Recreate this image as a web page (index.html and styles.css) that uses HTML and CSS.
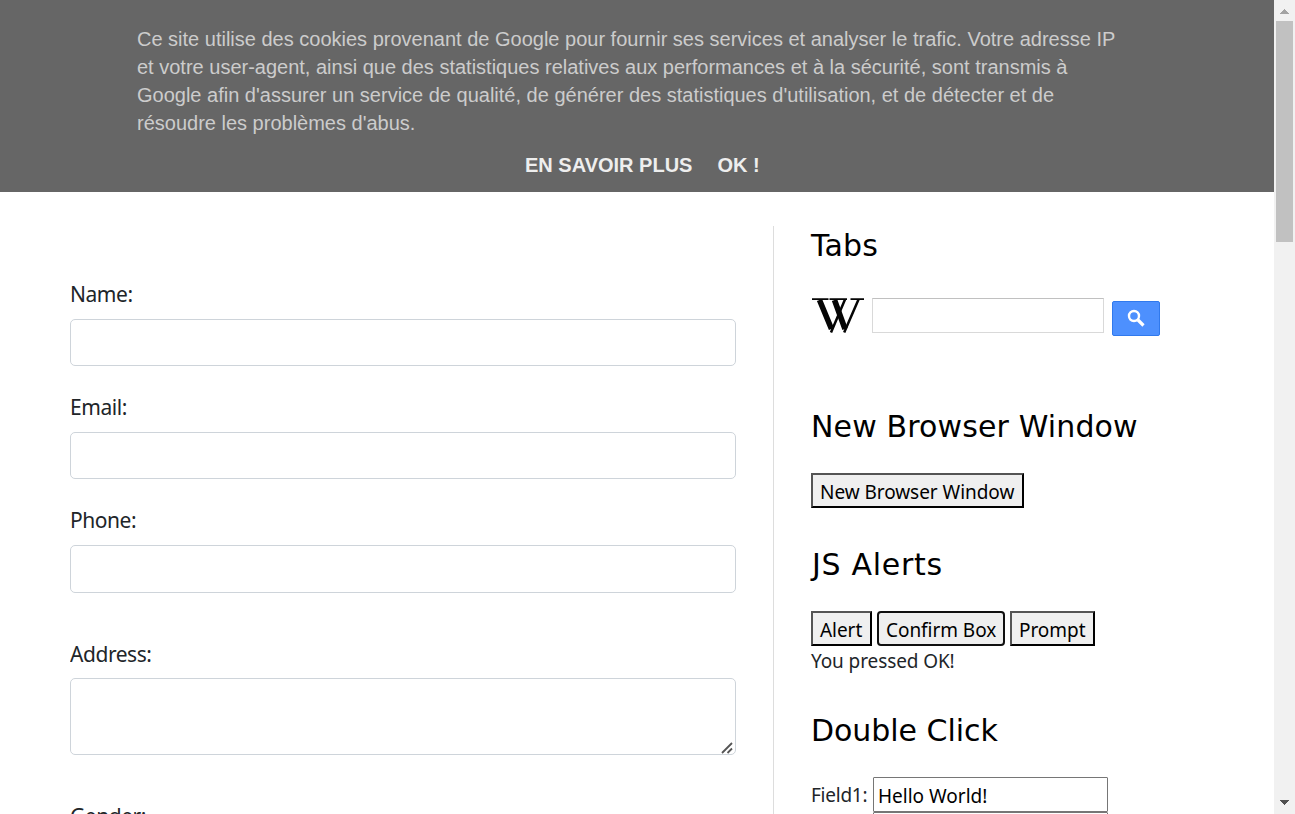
FILE: index.html
```html
<!DOCTYPE html>
<html lang="fr">
<head>
<meta charset="utf-8">
<title>Automation Testing Practice</title>
<link rel="stylesheet" href="styles.css">
</head>
<body>
<div class="viewport">
  <div class="page">
    <header class="cookies">
      <p class="notice">Ce site utilise des cookies provenant de Google pour fournir ses services et analyser le trafic. Votre adresse IP<br>et votre user-agent, ainsi que des statistiques relatives aux performances et à la sécurité, sont transmis à<br>Google afin d'assurer un service de qualité, de générer des statistiques d'utilisation, et de détecter et de<br>résoudre les problèmes d'abus.</p>
      <div class="actions"><a class="more">EN SAVOIR PLUS</a><a class="ok">OK !</a></div>
    </header>
    <main class="columns">
      <form class="form">
        <label class="label name">Name:</label><input class="field" type="text">
        <label class="label">Email:</label><input class="field" type="text">
        <label class="label">Phone:</label><input class="field phone" type="text">
        <label class="label address">Address:</label>
        <div class="area-box"><textarea class="field area"></textarea><svg class="grip" width="12" height="12" viewBox="0 0 12 12" stroke="#555" stroke-width="1.800"><path d="M1 11L11 1M6.500 11L11 6.500"/></svg></div>
        <label class="label gender">Gender:</label>
      </form>
      <aside class="side">
        <h2 class="title tabs">Tabs</h2>
        <div class="search">
          <svg class="wiki" width="54" height="37" viewBox="0 0 54 37" fill="none" stroke="#050505">
            <path stroke-width="1.700" d="M1 2.200H17.500M18.500 2.200H36M39.500 2.200H53"/>
            <path stroke-width="5.600" d="M8.500 3L20.500 32M23.500 3L34 32"/>
            <path stroke-width="2.500" d="M20 35.500L34 2.500M33.200 35.500L47.500 2.500"/>
          </svg>
          <input class="query" type="text">
          <button class="go" type="button"><svg width="20" height="20" viewBox="0 0 20 20" fill="none" stroke="#fff"><circle cx="8" cy="8" r="5" stroke-width="2.400"/><path stroke-width="3.200" d="M12 12L17.500 17.500"/></svg></button>
        </div>
        <h2 class="title window">New Browser Window</h2>
        <div class="row"><button class="btn b-window"><span>New Browser Window</span></button></div>
        <h2 class="title alerts">JS Alerts</h2>
        <div class="row"><button class="btn b-alert"><span>Alert</span></button><button class="btn b-confirm"><span>Confirm Box</span></button><button class="btn b-prompt"><span>Prompt</span></button></div>
        <p class="result">You pressed OK!</p>
        <h2 class="title double">Double Click</h2>
        <div class="line"><span class="caption">Field1:</span><input class="text" type="text" value="Hello World!"></div>
        <div class="line second"><input class="text" type="text"></div>
      </aside>
    </main>
  </div>
  <div class="scrollbar">
    <svg width="21" height="21" viewBox="0 0 21 21" shape-rendering="crispEdges"><path fill="#a3a3a3" d="M6 14L10.500 9L15 14Z"/></svg>
    <div class="thumb"></div>
    <svg class="down" width="21" height="21" viewBox="0 0 21 21" shape-rendering="crispEdges"><path fill="#505050" d="M6 7H15L10.500 12Z"/></svg>
  </div>
</div>
</body>
</html>
```
FILE: styles.css
```css
* { box-sizing: border-box; }
body { margin: 0; overflow: hidden; background: #fff; color: #212529; font-family: "Noto Sans", sans-serif; }
.viewport { display: flex; width: 1295px; height: 814px; overflow: hidden; }
.page { width: 1274px; height: 814px; overflow: hidden; }
.cookies { height: 192px; padding: 25px 137px 0; background: #666; font-family: "Liberation Sans", Arial, sans-serif; }
.notice { margin: 0; font-size: 20px; line-height: 28px; color: #ccc; white-space: nowrap; }
.actions { display: flex; margin: 14px 0 0 388px; gap: 25px; font-size: 20px; line-height: 28px; font-weight: bold; color: #eee; white-space: nowrap; }
.columns { display: flex; padding: 34px 0 0 70px; }
.form { width: 704px; height: 588px; padding-right: 38px; border-right: 1px solid #ddd; overflow: hidden; }
.label { display: block; height: 30px; margin: 26px 0 10px; font-size: 21px; line-height: 30px; letter-spacing: -0.45px; }
.name { margin: 53px 0 10px; }
.address { margin: 46px 0 9px; }
.gender { margin: 46px 0 0; }
.field { display: block; width: 666px; height: 47px; margin: 0; padding: 8px 15px; border: 1px solid #ced4da; border-radius: 5px; background: #fff; outline: 0; }
.phone { height: 48px; }
.area-box { position: relative; }
.area { height: 77px; resize: none; }
.grip { position: absolute; right: 2px; bottom: 1px; }
.side { width: 463px; padding-left: 37px; }
.title { margin: 0; height: 40px; font: 400 30px/40px "DejaVu Sans", Verdana, sans-serif; letter-spacing: 0.13px; color: #000; white-space: nowrap; }
.search { display: flex; height: 39px; margin-top: 31px; }
.wiki { margin-right: 7px; }
.query { width: 232px; height: 35px; margin: 1px 8px 0 0; border: 1px solid #d9d9d9; border-top-color: #c0c0c0; }
.go { display: flex; justify-content: center; width: 48px; height: 35px; margin-top: 4px; padding: 6px 0; border: 1px solid #3079ed; border-radius: 2px; background: #4d90fe; }
.title.window { margin-top: 71px; }
.row { display: flex; gap: 5px; margin-top: 26px; }
.btn { height: 35px; padding: 0 0 0 7px; border: 2px outset #000; background: #efefef; color: #000; font: 400 19px/31px "Noto Sans", sans-serif; letter-spacing: -0.05px; text-align: left; white-space: nowrap; }
.btn span { display: block; height: 31px; line-height: 34px; }
.b-window { width: 213px; }
.b-alert { width: 61px; }
.b-confirm { width: 128px; border: 2px solid #101010; border-radius: 4px; }
.b-prompt { width: 85px; }
.title.alerts { margin-top: 37px; letter-spacing: 0.7px; text-indent: 1px; }
.result { margin: 0; height: 30px; font-size: 19px; line-height: 30px; letter-spacing: -0.1px; }
.title.double { margin-top: 35px; letter-spacing: -0.05px; }
.line { display: flex; margin-top: 26px; font-size: 19px; line-height: 36px; letter-spacing: -0.25px; }
.line.second { margin-top: -1px; padding-left: 62px; }
.caption { width: 62px; white-space: nowrap; }
.text { width: 235px; height: 35px; padding: 3px 4px 0; border: 1px solid #767676; border-radius: 1px; font: 400 19px "Noto Sans", sans-serif; color: #000; }
.scrollbar { display: flex; flex-direction: column; width: 21px; height: 814px; background: #f1f1f1; }
.thumb { width: 17px; height: 221px; margin-left: 2px; background: #c1c1c1; }
.down { margin-top: auto; }
```
